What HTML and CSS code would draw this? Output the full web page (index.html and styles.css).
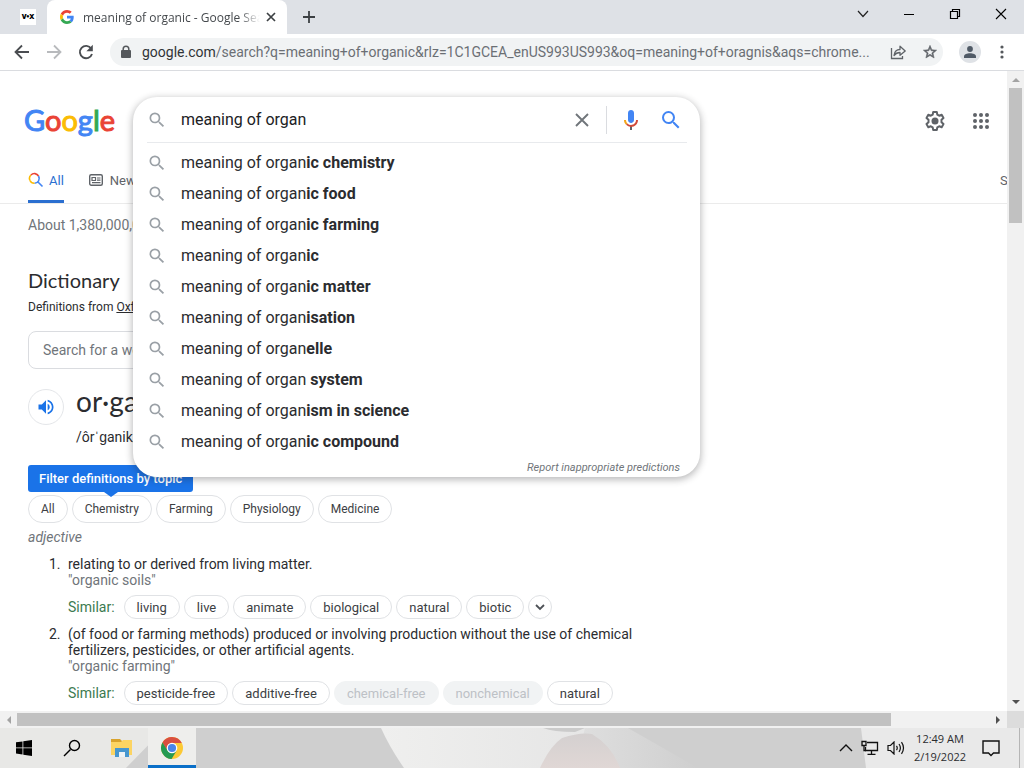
FILE: index.html
```html
<!DOCTYPE html>
<html lang="en">
<head>
    <meta charset="UTF-8">
    <meta name="viewport" content="width=device-width, initial-scale=1.0">
    <title>meaning of organic - Google Search</title>
    <link rel="stylesheet" href="styles.css">
</head>
<body>
    <!-- shared icons -->
    <svg class="sprite" width="0" height="0">
        <symbol id="magnifier" viewBox="0 0 24 24">
            <path fill="currentColor" d="M15.5 14h-.79l-.28-.27A6.471 6.471 0 0 0 16 9.5 6.5 6.5 0 1 0 9.5 16c1.61 0 3.09-.59 4.23-1.57l.27.28v.79l5 4.99L20.49 19l-4.99-5zm-6 0C7.01 14 5 11.99 5 9.5S7.01 5 9.5 5 14 7.01 14 9.5 11.99 14 9.5 14z"/>
        </symbol>
    </svg>

    <!-- tabs -->
    <div class="tabstrip">
        <div class="pinned-tab"><span>V•X</span></div>
        <div class="active-tab">
            <svg width="14" height="14" viewBox="0 0 48 48">
                <path fill="#EA4335" d="M24 9.5c3.54 0 6.71 1.22 9.21 3.6l6.85-6.85C35.9 2.38 30.47 0 24 0 14.62 0 6.51 5.38 2.56 13.22l7.98 6.19C12.43 13.72 17.74 9.5 24 9.5z"/>
                <path fill="#4285F4" d="M46.98 24.55c0-1.57-.15-3.09-.38-4.55H24v9.02h12.94c-.58 2.96-2.26 5.48-4.78 7.18l7.73 6c4.51-4.18 7.09-10.36 7.09-17.65z"/>
                <path fill="#FBBC05" d="M10.53 28.59c-.48-1.45-.76-2.99-.76-4.59s.27-3.14.76-4.59l-7.98-6.19C.92 16.46 0 20.12 0 24c0 3.88.92 7.54 2.56 10.78l7.97-6.19z"/>
                <path fill="#34A853" d="M24 48c6.48 0 11.93-2.13 15.89-5.81l-7.73-6c-2.15 1.45-4.92 2.3-8.16 2.3-6.26 0-11.57-4.22-13.47-9.91l-7.98 6.19C6.51 42.62 14.62 48 24 48z"/>
            </svg>
            <span class="tab-title">meaning of organic - Google Search</span>
            <button class="icon-button" aria-label="Close tab">
                <svg width="10" height="10" viewBox="0 0 10 10"><path d="M1 1l8 8M9 1L1 9" stroke="#3c4043" stroke-width="1.7"/></svg>
            </button>
        </div>
        <button class="icon-button new-tab" aria-label="New tab">
            <svg width="14" height="14" viewBox="0 0 14 14"><path d="M7 1v12M1 7h12" stroke="#3c4043" stroke-width="1.8"/></svg>
        </button>
        <div class="window-buttons">
            <button class="icon-button" aria-label="Search tabs"><svg width="12" height="12" viewBox="0 0 12 12"><path d="M1 3l5 5.500l5-5.500" fill="none" stroke="#222" stroke-width="1.200"/></svg></button>
            <button class="icon-button" aria-label="Minimize"><svg width="12" height="12" viewBox="0 0 12 12"><path d="M1 6.500h10" stroke="#000"/></svg></button>
            <button class="icon-button" aria-label="Restore"><svg width="12" height="12" viewBox="0 0 12 12"><path d="M1.500 3.500h7v7h-7zM3.500 3.500v-2h7v7h-2" fill="none" stroke="#000" stroke-width="1.200"/></svg></button>
            <button class="icon-button" aria-label="Close"><svg width="12" height="12" viewBox="0 0 12 12"><path d="M1 1l10 10M11 1L1 11" stroke="#000" stroke-width="1.100"/></svg></button>
        </div>
    </div>

    <!-- toolbar -->
    <div class="toolbar">
        <button class="icon-button" aria-label="Back"><svg width="16" height="16" viewBox="0 0 16 16"><path d="M15 8H2M8 1.500L1.500 8L8 14.500" fill="none" stroke="#4a4d51" stroke-width="1.800"/></svg></button>
        <button class="icon-button" aria-label="Forward"><svg width="16" height="16" viewBox="0 0 16 16"><path d="M1 8h13M8 1.500L14.500 8L8 14.500" fill="none" stroke="#b8babd" stroke-width="1.800"/></svg></button>
        <button class="icon-button" aria-label="Reload"><svg width="16" height="16" viewBox="0 0 16 16"><path d="M13.200 4.500A6.200 6.200 0 1 0 14 10" fill="none" stroke="#4a4d51" stroke-width="1.900"/><path d="M14.800 .8v6.400H8.400z" fill="#4a4d51"/></svg></button>
        <div class="omnibox">
            <svg width="10" height="14" viewBox="0 0 10 14"><path d="M2.200 6V4a2.800 2.800 0 0 1 5.600 0v2" fill="none" stroke="#55585c" stroke-width="1.500"/><rect y="5" width="10" height="8" rx="1" fill="#55585c"/></svg>
            <span class="url"><b>google.com</b>/search?q=meaning+of+organic&amp;rlz=1C1GCEA_enUS993US993&amp;oq=meaning+of+oragnis&amp;aqs=chrome...</span>
            <button class="icon-button" aria-label="Share"><svg width="16" height="16" viewBox="0 0 16 16"><path d="M1.500 4v10.500h11V12" fill="none" stroke="#5f6368" stroke-width="1.300"/><path d="M4 11.500C4.500 7.500 7 5.500 10 5.500V2.200L15.200 7L10 11.300V8.500C7.500 8.500 5.500 9.500 4 11.500z" fill="none" stroke="#5f6368" stroke-width="1.300" stroke-linejoin="round"/></svg></button>
            <button class="icon-button" aria-label="Bookmark"><svg width="16" height="16" viewBox="0 0 24 24"><path fill="#5f6368" d="M22 9.240l-7.190-.62L12 2 9.190 8.630 2 9.240l5.460 4.730L5.820 21 12 17.270 18.180 21l-1.630-7.030L22 9.240zM12 15.400l-3.760 2.270 1-4.280-3.320-2.880 4.380-.38L12 6.100l1.710 4.040 4.380.38-3.320 2.880 1 4.280L12 15.400z" stroke="#5f6368" stroke-width=".8"/></svg></button>
        </div>
        <button class="icon-button profile" aria-label="Profile"><svg width="12" height="12" viewBox="0 0 12 12"><circle cx="6" cy="3" r="2.900" fill="#505a66"/><path d="M0 12V10.500C0 8.300 3 7.200 6 7.200s6 1.100 6 3.300V12z" fill="#505a66"/></svg></button>
        <button class="icon-button" aria-label="Menu"><svg width="4" height="14" viewBox="0 0 4 14"><g fill="#55585c"><circle cx="2" cy="2" r="1.600"/><circle cx="2" cy="7" r="1.600"/><circle cx="2" cy="12" r="1.600"/></g></svg></button>
    </div>

    <div class="viewport">
        <div class="page">
            <header>
                <a href="#" class="logo"><span class="blue">G</span><span class="red">o</span><span class="yellow">o</span><span class="blue">g</span><span class="green">l</span><span class="red">e</span></a>
                <form class="search">
                    <div class="panel">
                        <div class="search-row">
                            <svg class="grey-icon" width="20" height="20"><use href="#magnifier"/></svg>
                            <input type="text" value="meaning of organ" aria-label="Search">
                            <button type="button" class="icon-button" aria-label="Clear"><svg width="14" height="14" viewBox="0 0 14 14"><path d="M1 1l12 12M13 1L1 13" stroke="#70757a" stroke-width="1.900"/></svg></button>
                            <span class="separator"></span>
                            <button type="button" class="icon-button" aria-label="Search by voice">
                                <svg width="24" height="24" viewBox="0 0 24 24"><path fill="#4285f4" d="M12 15c1.660 0 3-1.310 3-2.970V4.960C15 3.300 13.660 2 12 2S9 3.300 9 4.960v7.070C9 13.690 10.340 15 12 15z"/><path fill="#5f6368" d="M11 18.080h2V22h-2z"/><path fill="#f4a51c" d="M7.050 16.870C5.780 15.600 5 13.950 5 12h2c0 1.450.56 2.420 1.470 3.380z"/><path fill="#d04a3a" d="M12 16.930a4.970 4.970 0 0 1-3.540-1.550l-1.410 1.490A6.990 6.990 0 0 0 12 19c3.870 0 6.990-2.920 6.990-7h-1.990c0 2.920-2.240 4.930-5 4.930z"/></svg>
                            </button>
                            <button type="submit" class="icon-button search-go" aria-label="Google Search"><svg width="24" height="24"><use href="#magnifier"/></svg></button>
                        </div>
                        <ul class="suggestions">
                            <li><svg class="grey-icon" width="20" height="20"><use href="#magnifier"/></svg><span>meaning of organ<b>ic chemistry</b></span></li>
                            <li><svg class="grey-icon" width="20" height="20"><use href="#magnifier"/></svg><span>meaning of organ<b>ic food</b></span></li>
                            <li><svg class="grey-icon" width="20" height="20"><use href="#magnifier"/></svg><span>meaning of organ<b>ic farming</b></span></li>
                            <li><svg class="grey-icon" width="20" height="20"><use href="#magnifier"/></svg><span>meaning of organ<b>ic</b></span></li>
                            <li><svg class="grey-icon" width="20" height="20"><use href="#magnifier"/></svg><span>meaning of organ<b>ic matter</b></span></li>
                            <li><svg class="grey-icon" width="20" height="20"><use href="#magnifier"/></svg><span>meaning of organ<b>isation</b></span></li>
                            <li><svg class="grey-icon" width="20" height="20"><use href="#magnifier"/></svg><span>meaning of organ<b>elle</b></span></li>
                            <li><svg class="grey-icon" width="20" height="20"><use href="#magnifier"/></svg><span>meaning of organ <b>system</b></span></li>
                            <li><svg class="grey-icon" width="20" height="20"><use href="#magnifier"/></svg><span>meaning of organ<b>ism in science</b></span></li>
                            <li><svg class="grey-icon" width="20" height="20"><use href="#magnifier"/></svg><span>meaning of organ<b>ic compound</b></span></li>
                        </ul>
                        <a href="#" class="report">Report inappropriate predictions</a>
                    </div>
                </form>
                <div class="header-icons">
                    <button class="icon-button" aria-label="Settings"><svg width="24" height="24" viewBox="0 0 24 24"><path fill="none" stroke="#5f6368" stroke-width="2" stroke-linejoin="round" d="M10.200 3h3.600l.5 2.600 1.900 1.100 2.500-.9 1.800 3.100-2 1.800v2.600l2 1.800-1.800 3.100-2.500-.9-1.900 1.100-.5 2.600h-3.600l-.5-2.600-1.900-1.100-2.500.9-1.800-3.100 2-1.800v-2.600l-2-1.800 1.800-3.100 2.500.9 1.900-1.100z"/><circle cx="12" cy="12" r="3.500" fill="#5f6368"/></svg></button>
                    <button class="icon-button" aria-label="Google apps"><svg width="16" height="16" viewBox="0 0 16 16"><g fill="#5f6368"><circle cx="2" cy="2" r="2"/><circle cx="8" cy="2" r="2"/><circle cx="14" cy="2" r="2"/><circle cx="2" cy="8" r="2"/><circle cx="8" cy="8" r="2"/><circle cx="14" cy="8" r="2"/><circle cx="2" cy="14" r="2"/><circle cx="8" cy="14" r="2"/><circle cx="14" cy="14" r="2"/></g></svg></button>
                </div>
            </header>

            <nav>
                <a href="#" class="current">
                    <svg width="16" height="16" viewBox="0 0 16 16" fill="none" stroke-width="1.600"><path d="M2 8.500A4.700 4.700 0 0 1 3 3" stroke="#fbbc04"/><path d="M3 3A4.700 4.700 0 0 1 10.500 4" stroke="#ea4335"/><path d="M10.500 4A4.700 4.700 0 0 1 6.500 11.200M10 10l4.500 4.500" stroke="#4285f4"/><path d="M6.500 11.200A4.700 4.700 0 0 1 2 8.500" stroke="#fbbc04"/></svg>
                    All
                </a>
                <a href="#">
                    <svg width="14" height="14" viewBox="0 0 14 14"><rect x=".7" y="1.700" width="12.600" height="10.600" rx="1.500" fill="none" stroke="#5f6368" stroke-width="1.400"/><path d="M3 4.500h3.500v3H3zM8 5h3.500M8 7.200h3.500M3 9.700h8.500" fill="none" stroke="#5f6368" stroke-width="1.200"/></svg>
                    News
                </a>
                <a href="#" class="cut">S</a>
            </nav>

            <main>
                <p class="stats">About 1,380,000,000 results</p>
                <h2>Dictionary</h2>
                <p class="source">Definitions from <a href="#">Oxford Languages</a></p>
                <input class="word-search" type="text" placeholder="Search for a word" aria-label="Search for a word">
                <div class="word">
                    <button class="speaker" aria-label="Listen"><svg width="20" height="20" viewBox="0 0 24 24"><path fill="#1a73e8" d="M3 9v6h4l5 5V4L7 9H3zm13.500 3A4.500 4.500 0 0 0 14 7.970v8.050c1.480-.73 2.500-2.250 2.500-4.020zM14 3.230v2.060c2.890.86 5 3.540 5 6.710s-2.110 5.850-5 6.710v2.060c4.010-.91 7-4.490 7-8.770s-2.990-7.860-7-8.770z"/></svg></button>
                    <div>
                        <h1>or·gan·ic</h1>
                        <p>/ôrˈɡanik/</p>
                    </div>
                </div>
                <div class="tip">Filter definitions by topic</div>
                <div class="topics">
                    <button>All</button>
                    <button>Chemistry</button>
                    <button>Farming</button>
                    <button>Physiology</button>
                    <button>Medicine</button>
                </div>
                <p class="part">adjective</p>
                <ol>
                    <li>
                        <p>relating to or derived from living matter.</p>
                        <p class="example">"organic soils"</p>
                        <div class="similar">
                            <span>Similar:</span>
                            <button>living</button>
                            <button>live</button>
                            <button>animate</button>
                            <button>biological</button>
                            <button>natural</button>
                            <button>biotic</button>
                            <button class="more" aria-label="More"><svg width="10" height="8" viewBox="0 0 10 8"><path d="M1 2l4 4l4-4" fill="none" stroke="#4d5156" stroke-width="1.800"/></svg></button>
                        </div>
                    </li>
                    <li>
                        <p>(of food or farming methods) produced or involving production without the use of chemical fertilizers, pesticides, or other artificial agents.</p>
                        <p class="example">"organic farming"</p>
                        <div class="similar">
                            <span>Similar:</span>
                            <button>pesticide-free</button>
                            <button>additive-free</button>
                            <button disabled>chemical-free</button>
                            <button disabled>nonchemical</button>
                            <button>natural</button>
                        </div>
                    </li>
                </ol>
            </main>
        </div>

        <div class="scroll-y">
            <svg width="8" height="4" viewBox="0 0 8 4"><path d="M0 4l4-4l4 4z" fill="#a3a3a3"/></svg>
            <div class="thumb"></div>
            <svg width="8" height="4" viewBox="0 0 8 4"><path d="M0 0l4 4l4-4z" fill="#505050"/></svg>
        </div>
        <div class="scroll-x">
            <svg width="4" height="8" viewBox="0 0 4 8"><path d="M4 0L0 4l4 4z" fill="#a3a3a3"/></svg>
            <div class="thumb"></div>
            <svg width="4" height="8" viewBox="0 0 4 8"><path d="M0 0l4 4l-4 4z" fill="#505050"/></svg>
        </div>
        <div class="corner"></div>
    </div>

    <!-- taskbar -->
    <footer>
        <svg class="wallpaper" viewBox="0 0 1024 40" preserveAspectRatio="none">
            <defs>
                <linearGradient id="shade"><stop offset="0" stop-color="#efefee"/><stop offset="1" stop-color="#e4e4e4"/></linearGradient>
                <linearGradient id="pink" x2="0" y2="1"><stop offset="0" stop-color="#d4d0d0"/><stop offset="1" stop-color="#e0d7d5"/></linearGradient>
                <linearGradient id="fold"><stop offset="0" stop-color="#dfdfdf"/><stop offset="1" stop-color="#cfcfcf"/></linearGradient>
            </defs>
            <rect width="1024" height="40" fill="#cfcfcf"/>
            <path d="M0 0h165L126 40H0z" fill="#e8e8e6"/>
            <path d="M381 0h229l20 40H404Q390 20 381 0z" fill="url(#shade)"/>
            <path d="M585 0h43l70 40H575z" fill="url(#fold)"/>
            <path d="M543 0h42l-10 4q-22 0-32-4z" fill="#cbcbcb"/>
            <path d="M540 40q10-22 22-30q18-6 30-4q20 12 28 34z" fill="url(#pink)"/>
            <path d="M861 0h163v40H866z" fill="#e9e9e9"/>
        </svg>
        <button class="task" aria-label="Start"><svg width="16" height="16" viewBox="0 0 16 16"><path d="M0 2.300L6.500 1.400v6.100H0zM7.300 1.300L16 0v7.500H7.300zM0 8.300h6.500v6.200L0 13.600zM7.300 8.300H16V16l-8.700-1.300z"/></svg></button>
        <button class="task" aria-label="Search"><svg width="18" height="18" viewBox="0 0 18 18"><path d="M1 17l6.500-6.500" stroke="#000" stroke-width="1.500"/><circle cx="11.500" cy="6.500" r="5" fill="none" stroke="#000" stroke-width="1.400"/></svg></button>
        <button class="task explorer" aria-label="File Explorer"><svg width="22" height="20" viewBox="0 0 22 20"><path d="M0 1h9l2 2v3H0z" fill="#d9a32c"/><path d="M0 4h10l2-2h9v15H0z" fill="#fcd462"/><path d="M4 10h14v9h-4v-5H8v5H4z" fill="#4797cf"/><path d="M8 14h6v5H8z" fill="#eef3f6"/></svg></button>
        <button class="task running" aria-label="Chrome"><svg width="22" height="22" viewBox="0 0 22 22"><circle cx="11" cy="11" r="11" fill="#fcc934"/><path d="M11 0A11 11 0 0 0 1.470 5.500L6.200 13.700L11 6h9.800A11 11 0 0 0 11 0z" fill="#d94f40"/><path d="M1.470 5.500A11 11 0 0 0 10.600 22L15.700 13.500L6.600 13.500z" fill="#249a52"/><circle cx="11" cy="11" r="5.300" fill="#fff"/><circle cx="11" cy="11" r="4.100" fill="#4a85e8"/></svg></button>
        <div class="tray">
            <svg width="14" height="8" viewBox="0 0 14 8"><path d="M1 7l6-6l6 6" fill="none" stroke="#111" stroke-width="1.400"/></svg>
            <svg width="18" height="16" viewBox="0 0 18 16"><path d="M6 2.500h10.500v8H4.500V7M10.500 10.500v3.500M6.500 14.400h8" fill="none" stroke="#111" stroke-width="1.300"/><path d="M1 1.500h4v4H1zM3 5.500v5h2" fill="none" stroke="#111" stroke-width="1.300"/></svg>
            <svg width="18" height="14" viewBox="0 0 18 14"><path d="M1 4.500h2.500L7 1v12L3.500 9.500H1zM9.500 4.800q1.500 2.200 0 4.400M12 3q2.800 4 0 8M14.500 1.200q4 5.800 0 11.600" fill="none" stroke="#111" stroke-width="1.200"/></svg>
            <div class="clock"><span>12:49 AM</span><span>2/19/2022</span></div>
            <svg width="18" height="18" viewBox="0 0 18 18"><path d="M1 2h16v12h-5.500L9 16.500L6.500 14H1z" fill="none" stroke="#111" stroke-width="1.400"/></svg>
            <span class="show-desktop"></span>
        </div>
    </footer>
</body>
</html>
```

FILE: styles.css
```css
* {
    box-sizing: border-box;
}
body {
    display: flex;
    flex-direction: column;
    height: 100vh;
    margin: 0;
    overflow: hidden;
    font-family: Roboto, Arial, sans-serif;
    color: #2b2c2f;
    background: #fff;
}
h1, h2, p, ul, ol {
    margin: 0;
    padding: 0;
    font-weight: normal;
}
ul {
    list-style: none;
}
button, input {
    font-family: inherit;
    margin: 0;
}
svg {
    display: block;
    flex: none;
}
.sprite {
    position: absolute;
}
.icon-button {
    display: flex;
    align-items: center;
    justify-content: center;
    flex: none;
    padding: 0;
    border: 0;
    background: none;
}

/* browser tabs */
.tabstrip {
    display: flex;
    flex: none;
    height: 34px;
    background: #dee1e6;
    font-family: "Open Sans", sans-serif;
}
.pinned-tab {
    display: flex;
    align-items: center;
    width: 47px;
    padding-left: 20px;
}
.pinned-tab span {
    width: 16px;
    height: 16px;
    background: #fff;
    color: #000;
    font-size: 7px;
    font-weight: 800;
    line-height: 16px;
    text-align: center;
}
.active-tab {
    display: flex;
    align-items: center;
    width: 240px;
    padding: 0 11px 0 13px;
    border-radius: 8px 8px 0 0;
    background: #fff;
}
.tab-title {
    flex: 1;
    margin: 0 6px 0 9px;
    overflow: hidden;
    white-space: nowrap;
    font-size: 12px;
    color: #45494d;
    -webkit-mask-image: linear-gradient(to right, #000 88%, transparent);
    mask-image: linear-gradient(to right, #000 88%, transparent);
}
.new-tab {
    width: 44px;
}
.window-buttons {
    display: flex;
    margin-left: auto;
}
.window-buttons button {
    width: 46px;
    height: 28px;
}

/* toolbar */
.toolbar {
    display: flex;
    flex: none;
    align-items: center;
    gap: 16px;
    height: 37px;
    padding: 0 20px 0 14px;
    border-bottom: 1px solid #dadce0;
}
.omnibox {
    display: flex;
    flex: 1;
    align-items: center;
    gap: 16px;
    height: 28px;
    min-width: 0;
    padding: 0 5px 0 11px;
    border-radius: 14px;
    background: #f1f3f4;
}
.url {
    flex: 1;
    margin: 0 -4px 0 -5px;
    overflow: hidden;
    white-space: nowrap;
    font-size: 14px;
    color: #6b6f74;
}
.url b {
    font-weight: normal;
    color: #303337;
}
.profile {
    width: 22px;
    height: 22px;
    margin-right: 3px;
    border-radius: 50%;
    background: #dfe2e6;
}

/* page area with its scrollbars */
.viewport {
    display: grid;
    grid-template: 1fr 17px / 1fr 17px;
    flex: 1;
    min-height: 0;
}
.page {
    min-width: 0;
    overflow: hidden;
}
.scroll-y, .scroll-x {
    display: flex;
    align-items: center;
    justify-content: space-between;
    background: #f1f1f1;
}
.scroll-y {
    flex-direction: column;
    padding: 7px 0;
}
.scroll-x {
    padding: 0 7px;
}
.thumb {
    background: #c1c1c1;
}
.scroll-y .thumb {
    width: 13px;
    height: 135px;
    margin: 6px 0 auto;
}
.scroll-x .thumb {
    width: 88%;
    height: 13px;
    margin: 0 auto 0 6px;
}
.corner {
    background: #dcdcdc;
}

/* google header */
header {
    display: flex;
    padding: 26px 18px 0 24px;
}
.logo {
    width: 92px;
    margin-right: 17px;
    font-family: Lato, sans-serif;
    font-size: 29px;
    line-height: 46px;
    text-decoration: none;
    -webkit-text-stroke: 1px;
}
.blue {
    color: #4285f4;
}
.red {
    color: #ea4335;
}
.yellow {
    color: #fbbc05;
}
.green {
    color: #34a853;
}
.search {
    position: relative;
    flex: 0 1 567px;
    height: 46px;
}
.panel {
    position: absolute;
    top: 0;
    left: 0;
    z-index: 10;
    width: 100%;
    border-radius: 24px;
    background: #fff;
    box-shadow: 0 2px 7px 1px rgba(32, 33, 36, 0.3);
}
.search-row {
    display: flex;
    align-items: center;
    height: 46px;
    margin: 0 13px 0 14px;
    border-bottom: 1px solid #e8eaed;
}
.grey-icon {
    color: #9aa0a6;
}
.search-row input {
    flex: 1;
    min-width: 0;
    padding: 0 0 0 14px;
    border: 0;
    outline: 0;
    font-size: 16px;
    color: #202124;
}
.separator {
    width: 1px;
    height: 28px;
    margin: 0 12px 0 17px;
    background: #dadce0;
}
.search-go {
    margin: 0 4px 0 16px;
    color: #4285f4;
}
.suggestions {
    padding: 4px 14px 0;
}
.suggestions li {
    display: flex;
    align-items: center;
    gap: 14px;
    height: 31px;
    font-size: 16px;
}
.report {
    display: block;
    margin-right: 20px;
    padding-top: 2px;
    font-size: 11px;
    font-style: italic;
    line-height: 18px;
    text-align: right;
    text-decoration: none;
    color: #70757a;
}
.header-icons {
    display: flex;
    align-items: center;
    gap: 26px;
    height: 48px;
    margin-left: auto;
}

/* result type tabs */
nav {
    display: flex;
    gap: 25px;
    height: 59px;
    padding-left: 28px;
    border-bottom: 1px solid #ebebeb;
}
nav a {
    display: flex;
    align-items: center;
    gap: 7px;
    padding-top: 15px;
    border-bottom: 3px solid transparent;
    font-size: 13px;
    text-decoration: none;
    color: #5f6368;
}
nav .current {
    gap: 5px;
    border-color: #2b6fd0;
    color: #2b6fd0;
}
nav .cut {
    width: 7px;
    margin-left: auto;
}

/* dictionary */
main {
    padding-left: 28px;
    font-size: 14px;
}
.stats {
    margin-top: 11px;
    line-height: 20px;
    color: #70757a;
}
h2 {
    margin-top: 32px;
    font-family: Lato, sans-serif;
    font-size: 20px;
    line-height: 26px;
}
.source {
    margin: 5px 0 15px;
    font-size: 12px;
    line-height: 18px;
}
.source a {
    color: inherit;
}
.word-search {
    display: block;
    width: 300px;
    height: 38px;
    padding: 0 14px;
    border: 1px solid #dadce0;
    border-radius: 8px;
    font-size: 14px;
}
.word-search::placeholder {
    color: #70757a;
}
.word {
    display: flex;
    gap: 12px;
    margin-top: 20px;
}
.speaker {
    display: flex;
    align-items: center;
    justify-content: center;
    width: 36px;
    height: 36px;
    padding: 0;
    border: 1px solid #e4e6e9;
    border-radius: 50%;
    background: #fff;
}
h1 {
    font-family: Lato, sans-serif;
    font-size: 28px;
    line-height: 24px;
}
.word p {
    margin-top: 14px;
    line-height: 20px;
}
.tip {
    position: relative;
    width: max-content;
    margin: 18px 0 3px;
    padding: 0 11px;
    border-radius: 3px;
    background: #1a73e8;
    color: #fff;
    font-size: 13px;
    font-weight: 500;
    line-height: 27px;
}
.tip::after {
    content: "";
    position: absolute;
    left: 76px;
    top: 100%;
    border: 7px solid transparent;
    border-top: 5px solid #1a73e8;
    border-bottom: 0;
}
.topics {
    display: flex;
    gap: 4px;
}
.topics button, .similar button {
    height: 28px;
    padding: 0 12px;
    border: 1px solid #e0e2e5;
    border-radius: 14px;
    background: #fff;
    font-size: 12px;
    color: #3c4043;
}
.part {
    margin: 4px 0 9px;
    font-style: italic;
    line-height: 20px;
    color: #70757a;
}
ol {
    width: 612px;
    padding-left: 36px;
    line-height: 16px;
}
ol li {
    margin-bottom: 7px;
    padding-left: 4px;
}
.example {
    color: #70757a;
}
.similar {
    display: flex;
    align-items: center;
    gap: 4px;
    margin-top: 7px;
}
.similar span {
    margin-right: 5px;
    color: #3c7a50;
}
.similar button {
    height: 24px;
    font-size: 13px;
}
.similar button:disabled {
    border-color: #f1f3f4;
    background: #f1f3f4;
    color: #bdc1c6;
}
.similar .more {
    display: flex;
    align-items: center;
    justify-content: center;
    width: 24px;
    padding: 0;
}

/* taskbar */
footer {
    display: flex;
    position: relative;
    flex: none;
    height: 40px;
}
.wallpaper {
    position: absolute;
    z-index: -1;
    width: 100%;
    height: 100%;
}
.task {
    display: flex;
    align-items: center;
    justify-content: center;
    width: 48px;
    padding: 0;
    border: 0;
    background: none;
}
.explorer {
    width: 52px;
}
.running {
    border-bottom: 3px solid #0a6fc8;
    padding-top: 3px;
    background: #eeeeec;
}
.tray {
    display: flex;
    align-items: center;
    gap: 8px;
    margin-left: auto;
}
.clock {
    width: 54px;
    margin-right: 7px;
    font-family: "Open Sans", sans-serif;
    font-size: 11px;
    line-height: 18px;
    text-align: center;
}
.clock span {
    display: block;
}
.show-desktop {
    width: 5px;
    height: 40px;
    margin-left: 11px;
    border-left: 1px solid #b5b5b5;
}
```
